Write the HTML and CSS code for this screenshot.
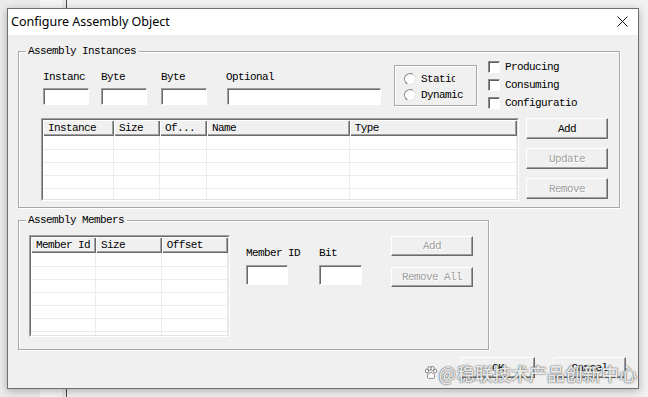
FILE: index.html
```html
<!DOCTYPE html>
<html lang="en">
<head>
    <meta charset="UTF-8">
    <title>Configure Assembly Object</title>
    <link rel="stylesheet" href="styles.css">
</head>
<body>
    <div class="dialog">
        <div class="titlebar">
            <span class="title">Configure Assembly Object</span>
            <svg class="close" width="11" height="11" viewBox="0 0 11 11">
                <path d="M0.5 0.5 L10.5 10.5 M10.5 0.5 L0.5 10.5" stroke="#111" stroke-width="1" fill="none"/>
            </svg>
        </div>

        <div class="content">
            <!-- Assembly Instances -->
            <div class="group group-instances">
                <span class="legend">Assembly Instances</span>
                <div class="inst-top">
                    <div class="field f-inst"><span class="lbl">Instanc</span><span class="edit"></span></div>
                    <div class="field f-byte1"><span class="lbl">Byte</span><span class="edit"></span></div>
                    <div class="field f-byte2"><span class="lbl">Byte</span><span class="edit"></span></div>
                    <div class="field f-opt"><span class="lbl">Optional</span><span class="edit"></span></div>
                    <div class="radio-box">
                        <div class="opt"><span class="radio"></span><span class="clip">Static</span></div>
                        <div class="opt"><span class="radio"></span>Dynamic</div>
                    </div>
                    <div class="checks">
                        <div class="opt"><span class="check"></span>Producing</div>
                        <div class="opt"><span class="check"></span>Consuming</div>
                        <div class="opt"><span class="check"></span>Configuratio</div>
                    </div>
                </div>
                <div class="inst-bottom">
                    <div class="list list-inst">
                        <div class="list-inner">
                            <table>
                                <colgroup><col style="width:71px"><col style="width:46px"><col style="width:47px"><col style="width:143px"><col style="width:167px"></colgroup>
                                <tr><th>Instance</th><th>Size</th><th>Of...</th><th>Name</th><th>Type</th></tr>
                                <tr><td></td><td></td><td></td><td></td><td></td></tr>
                                <tr><td></td><td></td><td></td><td></td><td></td></tr>
                                <tr><td></td><td></td><td></td><td></td><td></td></tr>
                                <tr><td></td><td></td><td></td><td></td><td></td></tr>
                                <tr><td></td><td></td><td></td><td></td><td></td></tr>
                            </table>
                        </div>
                    </div>
                    <div class="btn-col">
                        <button class="btn">Add</button>
                        <button class="btn" disabled>Update</button>
                        <button class="btn" disabled>Remove</button>
                    </div>
                </div>
            </div>

            <!-- Assembly Members -->
            <div class="group group-members">
                <span class="legend">Assembly Members</span>
                <div class="members-row">
                    <div class="list list-members">
                        <div class="list-inner">
                            <table>
                                <colgroup><col style="width:65px"><col style="width:66px"><col style="width:66px"></colgroup>
                                <tr><th>Member Id</th><th>Size</th><th>Offset</th></tr>
                                <tr><td></td><td></td><td></td></tr>
                                <tr><td></td><td></td><td></td></tr>
                                <tr><td></td><td></td><td></td></tr>
                                <tr><td></td><td></td><td></td></tr>
                                <tr><td></td><td></td><td></td></tr>
                                <tr><td></td><td></td><td></td></tr>
                                <tr><td></td><td></td><td></td></tr>
                            </table>
                        </div>
                    </div>
                    <div class="field f-member"><span class="lbl">Member ID</span><span class="edit"></span></div>
                    <div class="field f-bit"><span class="lbl">Bit</span><span class="edit"></span></div>
                    <div class="btn-col member-btns">
                        <button class="btn" disabled>Add</button>
                        <button class="btn" disabled>Remove All</button>
                    </div>
                </div>
            </div>

            <div class="footer">
                <button class="btn btn-ok">OK</button>
                <button class="btn btn-cancel">Cancel</button>
            </div>
        </div>

        <div class="watermark">
            <svg class="paw" width="14" height="14" viewBox="0 0 14 14">
                <g fill="#fff" stroke="#777" stroke-width="0.9">
                    <ellipse cx="3" cy="5" rx="1.6" ry="2"/>
                    <ellipse cx="5.6" cy="2.4" rx="1.6" ry="2"/>
                    <ellipse cx="8.6" cy="2.4" rx="1.6" ry="2"/>
                    <ellipse cx="11.2" cy="5" rx="1.6" ry="2"/>
                    <path d="M7 6.5 C4.5 6.5 3 9.5 3.5 11.5 C4.2 13.2 6 12.2 7 12.2 C8 12.2 9.8 13.2 10.5 11.5 C11 9.5 9.5 6.5 7 6.5 Z"/>
                </g>
            </svg>
            <span class="at">@</span>
            <span class="wm-text">稳联技术产品创新中心</span>
        </div>
    </div>
</body>
</html>
```

FILE: styles.css
```css
body {
    margin: 0;
    padding: 8px 0 0 7px;
    height: 397px;
    box-sizing: border-box;
    overflow: hidden;
    background: linear-gradient(to right, #ebebeb 0, #ebebeb 40px, #f5f5f5 40px, #f5f5f5 62px, #e8e8e8 62px, #e8e8e8 66px, #4a4a4a 66px, #4a4a4a 67px, #f1f1f1 67px);
    font-family: "Liberation Mono", "Courier New", monospace;
    font-size: 11px;
    letter-spacing: -0.6px;
    color: #000;
}

.dialog {
    position: relative;
    width: 632px;
    height: 381px;
    box-sizing: border-box;
    border: 1px solid #6e6e6e;
    background: #f0f0f0;
    box-shadow: 0 2px 8px rgba(0, 0, 0, 0.28);
    display: flex;
    flex-direction: column;
}

/* Title bar */
.titlebar {
    height: 26px;
    background: #fff;
    display: flex;
    align-items: center;
    justify-content: space-between;
    padding: 0 10px 0 3px;
    flex-shrink: 0;
}

.title {
    font-family: "Noto Sans", sans-serif;
    font-size: 12.5px;
    letter-spacing: 0;
    color: #000;
    margin-top: -1px;
}

.close {
    display: block;
    margin-top: -1px;
}

.content {
    flex: 1;
    display: flex;
    flex-direction: column;
    padding: 16px 0 0 10px;
}

/* Group boxes */
.group {
    position: relative;
    box-sizing: border-box;
    border: 1px solid #a8a8a8;
    box-shadow: 1px 1px 0 #fff, inset 1px 1px 0 #fff;
}

.legend {
    position: absolute;
    top: -7px;
    left: 7px;
    padding: 0 3px 0 2px;
    line-height: 12px;
    background: #f0f0f0;
}

.group-instances {
    width: 602px;
    height: 157px;
}

.group-members {
    width: 471px;
    height: 130px;
    margin-top: 12px;
}

.inst-top {
    display: flex;
    align-items: flex-start;
    padding: 6px 0 0 24px;
}

.field {
    display: flex;
    flex-direction: column;
    margin-top: 13px;
}

.lbl {
    line-height: 12px;
    height: 12px;
    margin-bottom: 5px;
    white-space: nowrap;
}

.edit {
    display: block;
    height: 17px;
    box-sizing: border-box;
    background: #fff;
    border: 1px solid;
    border-color: #a0a0a0 #fff #fff #a0a0a0;
    box-shadow: inset 1px 1px 0 #6a6a6a;
}

.f-inst { width: 46px; margin-right: 12px; }
.f-byte1 { width: 46px; margin-right: 14px; }
.f-byte2 { width: 46px; margin-right: 20px; }
.f-opt { width: 154px; margin-right: 13px; }
.f-opt .lbl { margin-left: -1px; }

.radio-box {
    width: 83px;
    height: 41px;
    box-sizing: border-box;
    margin-top: 7px;
    margin-right: 11px;
    border: 1px solid #a8a8a8;
    box-shadow: 1px 1px 0 #fff, inset 1px 1px 0 #fff;
    padding: 5px 0 0 9px;
}

.opt {
    display: flex;
    align-items: center;
    white-space: nowrap;
}

.radio-box .opt {
    height: 16px;
}

.radio {
    width: 12px;
    height: 12px;
    box-sizing: border-box;
    border-radius: 50%;
    border: 1.5px solid;
    border-color: #7c7c7c #e4e4e4 #e4e4e4 #7c7c7c;
    background: #fff;
    margin-right: 5px;
    transform: rotate(-15deg);
}

.clip {
    display: inline-block;
    width: 34px;
    overflow: hidden;
}

.checks .opt {
    height: 18px;
}

.check {
    width: 12px;
    height: 12px;
    box-sizing: border-box;
    border: 1px solid;
    border-color: #8a8a8a #fff #fff #8a8a8a;
    box-shadow: inset 1px 1px 0 #5e5e5e;
    background: #fff;
    margin-right: 5px;
}

.inst-bottom {
    display: flex;
    align-items: flex-start;
    padding: 6px 0 0 22px;
}

/* List views */
.list {
    box-sizing: border-box;
    border: 1px solid;
    border-color: #a0a0a0 #fff #fff #a0a0a0;
}

.list-inner {
    height: 100%;
    box-sizing: border-box;
    border: 1px solid;
    border-color: #6a6a6a #e3e3e3 #e3e3e3 #6a6a6a;
    background: #fff;
    overflow: hidden;
}

.list-inst {
    width: 478px;
    height: 83px;
    margin-right: 7px;
}

.list-members {
    width: 201px;
    height: 102px;
    margin-right: 16px;
}

table {
    border-collapse: collapse;
    table-layout: fixed;
}

th {
    height: 16px;
    padding: 0 0 0 5px;
    box-sizing: border-box;
    text-align: left;
    font-weight: normal;
    line-height: 14px;
    background: #f0f0f0;
    white-space: nowrap;
    overflow: hidden;
    box-shadow: inset 1px 1px 0 #fff, inset -1px -1px 0 #6a6a6a, inset -2px -2px 0 #a0a0a0;
}

td {
    height: 13px;
    padding: 0;
    box-sizing: border-box;
    border-right: 1px solid #ececec;
    border-bottom: 1px solid #ececec;
}

/* Buttons */
.btn-col {
    display: flex;
    flex-direction: column;
    gap: 9px;
}

.btn {
    width: 82px;
    height: 21px;
    box-sizing: border-box;
    padding: 0;
    font: inherit;
    letter-spacing: inherit;
    color: #000;
    background: #f0f0f0;
    border: 1px solid;
    border-color: #fff #6a6a6a #6a6a6a #fff;
    box-shadow: inset -1px -1px 0 #a0a0a0;
}

.btn:disabled {
    color: #a0a0a0;
    text-shadow: 1px 1px 0 #fff;
}

.members-row {
    display: flex;
    align-items: flex-start;
    padding: 14px 0 0 10px;
}

.members-row .field {
    margin-top: 12px;
}

.members-row .lbl {
    margin-bottom: 6px;
}

.members-row .edit {
    height: 20px;
}

.f-member { width: 42px; margin-right: 31px; }
.f-bit { width: 43px; margin-right: 29px; }

.member-btns {
    margin-top: 1px;
    gap: 11px;
}

.member-btns .btn {
    height: 20px;
}

.footer {
    display: flex;
    justify-content: flex-end;
    gap: 18px;
    margin-top: 7px;
    padding-right: 12px;
}

.btn-ok { width: 74px; }
.btn-cancel { width: 73px; }

/* Watermark */
.watermark {
    position: absolute;
    right: 1px;
    bottom: 3px;
    display: flex;
    align-items: center;
    font-family: "Noto Sans CJK SC", sans-serif;
    font-size: 18px;
    font-weight: 500;
    letter-spacing: 0;
    color: rgba(255, 255, 255, 0.9);
    text-shadow: 0 0 1px #444, 0 0 2px rgba(0, 0, 0, 0.5);
    line-height: 24px;
}

.paw {
    display: block;
    margin-right: 1px;
}

.at {
    margin-right: 1px;
}
```
